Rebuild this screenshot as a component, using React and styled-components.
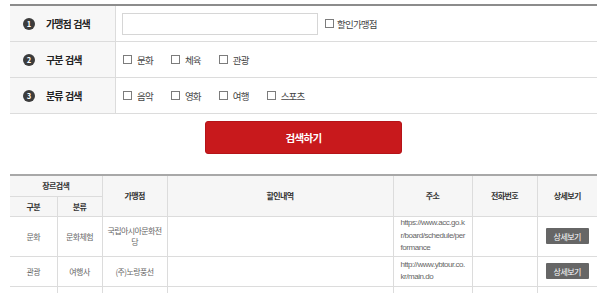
import React from 'react';
import styled, { createGlobalStyle } from 'styled-components';

const Global = createGlobalStyle`
  *, *::before, *::after { box-sizing: border-box; }
  html, body { margin: 0; padding: 0; overflow: hidden; background: #fff; }
  body { font-family: "Noto Sans CJK KR", "Noto Sans", sans-serif; }
`;

const Page = styled.div`
  padding: 4px 0 0 10px;
  width: 597px;
`;

const SearchBox = styled.div`
  border-top: 2px solid #8c8c8c;
  display: grid;
  grid-template-columns: 106px 1fr;
`;

const Label = styled.div`
  height: 36px;
  border-bottom: 1px solid #dcdcdc;
  border-right: 1px solid #dcdcdc;
  background: #f7f7f7;
  display: flex;
  align-items: center;
  padding-left: 13px;
  gap: 11px;
  font-size: 10px;
  font-weight: 700;
  letter-spacing: -0.9px;
  word-spacing: 1px;
  color: #222;
  white-space: pre;
`;

const Num = styled.span`
  width: 12px;
  height: 12px;
  border-radius: 50%;
  background: #3c3c3c;
  color: #fff;
  font-size: 7.5px;
  font-weight: 700;
  letter-spacing: 0;
  display: flex;
  align-items: center;
  justify-content: center;
  line-height: 1;
`;

const Field = styled.div`
  height: 36px;
  border-bottom: 1px solid #dcdcdc;
  display: flex;
  align-items: center;
  padding-left: ${p => (p.$input ? 6 : 7)}px;
  gap: ${p => (p.$input ? 7 : 18)}px;
`;

const TextInput = styled.input`
  width: 196px;
  height: 22px;
  border: 1px solid #d6d6d6;
  margin: 0;
  padding: 0 5px;
  outline: none;
`;

const Check = styled.label`
  display: inline-flex;
  align-items: center;
  gap: ${p => (p.$tight ? 3 : 5)}px;
  font-size: 9.5px;
  letter-spacing: -0.8px;
  color: #444;
  white-space: nowrap;
`;

const Box = styled.input`
  appearance: none;
  -webkit-appearance: none;
  width: 9px;
  height: 9px;
  margin: 0;
  border: 1px solid #7c7c7c;
  background: #fff;
`;

const SearchButton = styled.button`
  display: block;
  margin: 7px auto 20px;
  width: 197px;
  height: 33px;
  border: 1px solid #b51318;
  border-radius: 3px;
  background: #c8191c;
  color: #fff;
  font-family: inherit;
  font-size: 10.5px;
  font-weight: 700;
  letter-spacing: -0.6px;
  padding: 0;
`;

const Table = styled.table`
  width: 587px;
  table-layout: fixed;
  border-collapse: collapse;
  border-top: 2px solid #a8a8a8;
`;

const Th = styled.th`
  background: #f6f6f6;
  font-size: 8px;
  font-weight: 700;
  letter-spacing: -0.6px;
  color: #333;
  border-left: ${p => (p.$first ? 'none' : '1px solid #dcdcdc')};
  border-bottom: 1px solid #dcdcdc;
  padding: 0;
  text-align: center;
  vertical-align: middle;
`;

const Row = styled.tr`
  height: ${p => p.$h}px;
`;

const Td = styled.td`
  font-size: 8px;
  letter-spacing: -0.6px;
  color: #666;
  border-left: ${p => (p.$first ? 'none' : '1px solid #dcdcdc')};
  border-bottom: 1px solid #dcdcdc;
  padding: 0 4px;
  text-align: center;
  vertical-align: middle;
  line-height: 11px;
  word-break: break-all;
`;

const UrlTd = styled(Td)`
  text-align: left;
  padding: 0 5px 0 7px;
  font-family: "Liberation Sans", "Noto Sans CJK KR", sans-serif;
  font-size: 8px;
  letter-spacing: -0.45px;
  line-height: 12.5px;
`;

const DetailButton = styled.button`
  width: 43px;
  height: 16px;
  border: none;
  border-radius: 1px;
  background: #666;
  color: #fff;
  font-family: inherit;
  font-size: 8px;
  letter-spacing: -0.5px;
  padding: 0;
`;

const rows = [
  { h: 40, type: '문화', cat: '문화체험', name: '국립아시아문화전당', url: 'https://www.acc.go.kr/board/schedule/performance' },
  { h: 30, type: '관광', cat: '여행사', name: '(주)노랑풍선', url: 'http://www.ybtour.co.kr/main.do' },
  { h: 30, type: '', cat: '', name: '', url: '' },
];

export default function App() {
  return (
    <>
      <Global />
      <Page>
        <SearchBox>
          <Label><Num>1</Num>가맹점 검색</Label>
          <Field $input>
            <TextInput type="text" />
            <Check $tight><Box type="checkbox" />할인가맹점</Check>
          </Field>
          <Label><Num>2</Num>구분 검색</Label>
          <Field>
            <Check><Box type="checkbox" />문화</Check>
            <Check><Box type="checkbox" />체육</Check>
            <Check><Box type="checkbox" />관광</Check>
          </Field>
          <Label><Num>3</Num>분류 검색</Label>
          <Field>
            <Check><Box type="checkbox" />음악</Check>
            <Check><Box type="checkbox" />영화</Check>
            <Check><Box type="checkbox" />여행</Check>
            <Check><Box type="checkbox" />스포츠</Check>
          </Field>
        </SearchBox>
        <SearchButton type="button">검색하기</SearchButton>
        <Table>
          <colgroup>
            <col style={{ width: 47 }} />
            <col style={{ width: 45 }} />
            <col style={{ width: 65 }} />
            <col style={{ width: 226 }} />
            <col style={{ width: 79 }} />
            <col style={{ width: 65 }} />
            <col style={{ width: 60 }} />
          </colgroup>
          <thead>
            <Row $h={21}>
              <Th $first colSpan={2}>장르검색</Th>
              <Th rowSpan={2}>가맹점</Th>
              <Th rowSpan={2}>할인내역</Th>
              <Th rowSpan={2}>주소</Th>
              <Th rowSpan={2}>전화번호</Th>
              <Th rowSpan={2}>상세보기</Th>
            </Row>
            <Row $h={20}>
              <Th $first>구분</Th>
              <Th>분류</Th>
            </Row>
          </thead>
          <tbody>
            {rows.map((r, i) => (
              <Row $h={r.h} key={i}>
                <Td $first>{r.type}</Td>
                <Td>{r.cat}</Td>
                <Td>{r.name}</Td>
                <Td></Td>
                <UrlTd>{r.url}</UrlTd>
                <Td></Td>
                <Td><DetailButton type="button">상세보기</DetailButton></Td>
              </Row>
            ))}
          </tbody>
        </Table>
      </Page>
    </>
  );
}
